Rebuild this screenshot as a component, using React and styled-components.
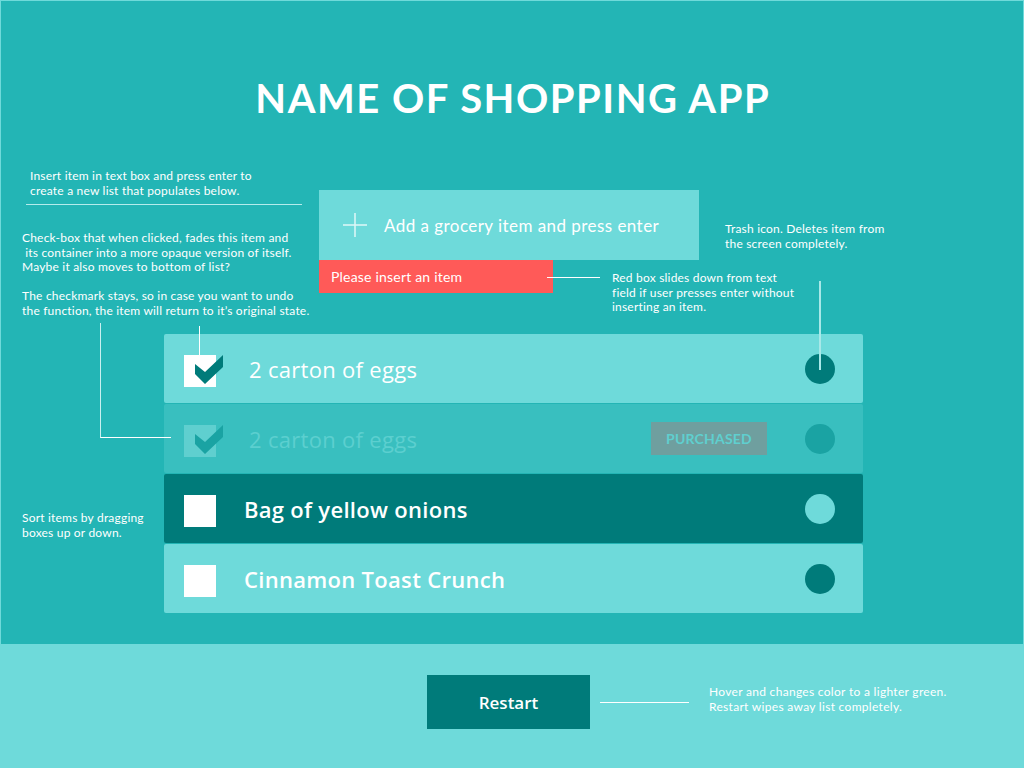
import React from 'react';
import styled, { createGlobalStyle, css } from 'styled-components';

const items = [
    { id: 1, name: '2 carton of eggs', tone: 'light', checked: true, indent: 33, weight: 500, pointer: 'top' },
    { id: 2, name: '2 carton of eggs', tone: 'faded', checked: true, indent: 33, weight: 500, pointer: 'side', purchased: true },
    { id: 3, name: 'Bag of yellow onions', tone: 'dark', indent: 28, weight: 600 },
    { id: 4, name: 'Cinnamon Toast Crunch', tone: 'light', indent: 28, weight: 600 },
];

const tones = {
    light: { bg: '#6edada', text: '#ffffff', box: '#ffffff', check: '#007b7a', dot: '#007b7a' },
    faded: { bg: '#39bfbf', text: '#5ccfcf', box: '#5fcfcf', check: '#1aa3a3', dot: '#1aa3a3' },
    dark: { bg: '#007b7a', text: '#ffffff', box: '#ffffff', check: '#007b7a', dot: '#6edada' },
};

function CheckMark({ color }) {
    return (
        <CheckSvg width="40" height="32" viewBox="0 0 40 32">
            <polygon points="11,9 21,17 39,0 39,12 21,29 11,19" fill={color} />
        </CheckSvg>
    );
}

function ItemRow({ item, index }) {
    const t = tones[item.tone];
    return (
        <Row $bg={t.bg}>
            <CheckBox $bg={t.box} $pointer={item.pointer}>
                {item.checked && <CheckMark color={t.check} />}
            </CheckBox>
            <ItemName $color={t.text} $indent={item.indent} $weight={item.weight}>
                {item.name}
            </ItemName>
            {item.purchased && <Badge>PURCHASED</Badge>}
            <TrashDot $bg={t.dot} $pointer={index === 0} />
        </Row>
    );
}

export default function App() {
    return (
        <Page>
            <GlobalStyle />
            <Top>
                <Title>NAME OF SHOPPING APP</Title>
                <Upper>
                    <LeftNotes>
                        <Note $indent={8}>
                            Insert item in text box and press enter to
                            <br />
                            create a new list that populates below.
                        </Note>
                        <Rule />
                        <Note $gap={26}>
                            Check-box that when clicked, fades this item and
                            <br />
                            &nbsp;its container into a more opaque version of itself.
                            <br />
                            Maybe it also moves to bottom of list?
                        </Note>
                        <Note $gap={14.5}>
                            The checkmark stays, so in case you want to undo
                            <br />
                            the function, the item will return to it’s original state.
                        </Note>
                    </LeftNotes>
                    <Center>
                        <InputRow>
                            <InputBox>
                                <svg width="24" height="24" viewBox="0 0 24 24">
                                    <path d="M12 0v24M0 12h24" stroke="#dff7f7" strokeWidth="1.5" />
                                </svg>
                                <Placeholder>Add a grocery item and press enter</Placeholder>
                            </InputBox>
                            <Note $indent={26} $gap={32}>
                                Trash icon. Deletes item from
                                <br />
                                the screen completely.
                            </Note>
                        </InputRow>
                        <ErrorRow>
                            <ErrorBox>Please insert an item</ErrorBox>
                            <Connector $offset={-6} $width={53} $top={17} />
                            <Note $indent={12} $gap={11}>
                                Red box slides down from text
                                <br />
                                field if user presses enter without
                                <br />
                                inserting an item.
                            </Note>
                        </ErrorRow>
                    </Center>
                </Upper>
                <ListArea>
                    <SortNote>
                        Sort items by dragging
                        <br />
                        boxes up or down.
                    </SortNote>
                    <List>
                        {items.map((item, i) => (
                            <ItemRow key={item.id} item={item} index={i} />
                        ))}
                    </List>
                </ListArea>
            </Top>
            <Bottom>
                <RestartButton>Restart</RestartButton>
                <Connector $offset={10} $width={89} $top={27} />
                <Note $indent={20} $gap={10} $spacing={0.3}>
                    Hover and changes color to a lighter green.
                    <br />
                    Restart wipes away list completely.
                </Note>
            </Bottom>
        </Page>
    );
}

const GlobalStyle = createGlobalStyle`
    body {
        margin: 0;
        font-family: Lato, "Open Sans", sans-serif;
        background: #23b5b5;
    }
`;

const Page = styled.div`
    width: 1024px;
    height: 768px;
    overflow: hidden;
`;

const Top = styled.div`
    box-sizing: border-box;
    height: 644px;
    background: #23b5b5;
    border: 1px solid #6fdada;
    border-bottom: none;
    display: flex;
    flex-direction: column;
`;

const Title = styled.h1`
    margin: 77px 0 0;
    height: 40px;
    font-size: 40px;
    line-height: 1;
    font-weight: 700;
    letter-spacing: 1.5px;
    padding-left: 1.5px;
    color: #ffffff;
    text-align: center;
`;

const Upper = styled.div`
    margin-top: 51px;
    padding-left: 21px;
    display: flex;
    align-items: flex-start;
`;

const LeftNotes = styled.div`
    width: 297px;
    display: flex;
    flex-direction: column;
`;

const Note = styled.div`
    flex-shrink: 0;
    margin-left: ${(p) => p.$indent || 0}px;
    margin-top: ${(p) => p.$gap || 0}px;
    font-size: 12px;
    line-height: 14.5px;
    letter-spacing: ${(p) => p.$spacing ?? 0.2}px;
    color: #ffffff;
    white-space: nowrap;
`;

const Rule = styled.div`
    width: 276px;
    height: 1px;
    margin: 6px 0 0 4px;
    background: #b4ecec;
`;

const Center = styled.div`
    margin-top: 21px;
    display: flex;
    flex-direction: column;
`;

const InputRow = styled.div`
    display: flex;
    align-items: flex-start;
`;

const InputBox = styled.div`
    width: 380px;
    height: 70px;
    flex-shrink: 0;
    box-sizing: border-box;
    background: #6edada;
    display: flex;
    align-items: center;
    padding-left: 24px;
    gap: 17px;
`;

const Placeholder = styled.span`
    font-size: 17px;
    color: #ffffff;
    letter-spacing: 0.45px;
`;

const ErrorRow = styled.div`
    display: flex;
    align-items: flex-start;
`;

const ErrorBox = styled.div`
    width: 234px;
    height: 33px;
    flex-shrink: 0;
    box-sizing: border-box;
    background: #ff5a58;
    color: #ffffff;
    font-size: 14px;
    letter-spacing: 0.2px;
    display: flex;
    align-items: center;
    padding-left: 12px;
`;

const Connector = styled.div`
    flex-shrink: 0;
    width: ${(p) => p.$width}px;
    height: 1px;
    margin: ${(p) => p.$top}px 0 0 ${(p) => p.$offset}px;
    background: #ffffff;
    position: relative;
`;

const ListArea = styled.div`
    margin-top: 16px;
    padding-left: 21px;
    display: flex;
    align-items: flex-start;
`;

const SortNote = styled.div`
    width: 142px;
    margin-top: 177px;
    font-size: 12px;
    line-height: 14.5px;
    letter-spacing: 0.2px;
    color: #ffffff;
`;

const List = styled.div`
    width: 699px;
    display: flex;
    flex-direction: column;
    gap: 1px;
`;

const Row = styled.div`
    height: 69px;
    background: ${(p) => p.$bg};
    border-radius: 2px;
    display: flex;
    align-items: center;
    padding: 0 28px 0 20px;
`;

const CheckBox = styled.div`
    position: relative;
    width: 32px;
    height: 32px;
    margin-top: 5px;
    flex-shrink: 0;
    background: ${(p) => p.$bg};

    ${(p) =>
        p.$pointer === 'top' &&
        css`
            &::before {
                content: '';
                position: absolute;
                left: 15px;
                top: -29px;
                width: 1px;
                height: 29px;
                background: #ffffff;
            }
        `}

    ${(p) =>
        p.$pointer === 'side' &&
        css`
            &::before {
                content: '';
                position: absolute;
                left: -84px;
                top: -102px;
                width: 70px;
                height: 114px;
                border-left: 1px solid #c8f0f0;
                border-bottom: 1px solid #ffffff;
            }
        `}
`;

const CheckSvg = styled.svg`
    position: absolute;
    left: 0;
    top: 0;
`;

const ItemName = styled.span`
    margin-left: ${(p) => p.$indent}px;
    flex: 1;
    font-family: "Open Sans", Lato, sans-serif;
    font-size: 22px;
    letter-spacing: 0.3px;
    font-weight: ${(p) => p.$weight};
    color: ${(p) => p.$color};
`;

const Badge = styled.div`
    width: 116px;
    height: 33px;
    margin-right: 38px;
    background: #6f9f9f;
    color: #5fcfcf;
    font-size: 14px;
    font-weight: 700;
    letter-spacing: 0.2px;
    display: flex;
    align-items: center;
    justify-content: center;
`;

const TrashDot = styled.div`
    position: relative;
    width: 30px;
    height: 30px;
    border-radius: 50%;
    background: ${(p) => p.$bg};
    flex-shrink: 0;

    ${(p) =>
        p.$pointer &&
        css`
            &::after {
                content: '';
                position: absolute;
                left: 14px;
                top: -73px;
                width: 2px;
                height: 89px;
                background: #a8e8e8;
            }
        `}
`;

const Bottom = styled.div`
    height: 124px;
    box-sizing: border-box;
    background: #6edada;
    padding: 31px 0 0 427px;
    display: flex;
    align-items: flex-start;
`;

const RestartButton = styled.button`
    width: 163px;
    height: 54px;
    flex-shrink: 0;
    border: none;
    background: #007b7a;
    color: #ffffff;
    font-family: "Open Sans", Lato, sans-serif;
    font-size: 17px;
    font-weight: 600;
    cursor: pointer;

    &:hover {
        background: #1aa3a3;
    }
`;
